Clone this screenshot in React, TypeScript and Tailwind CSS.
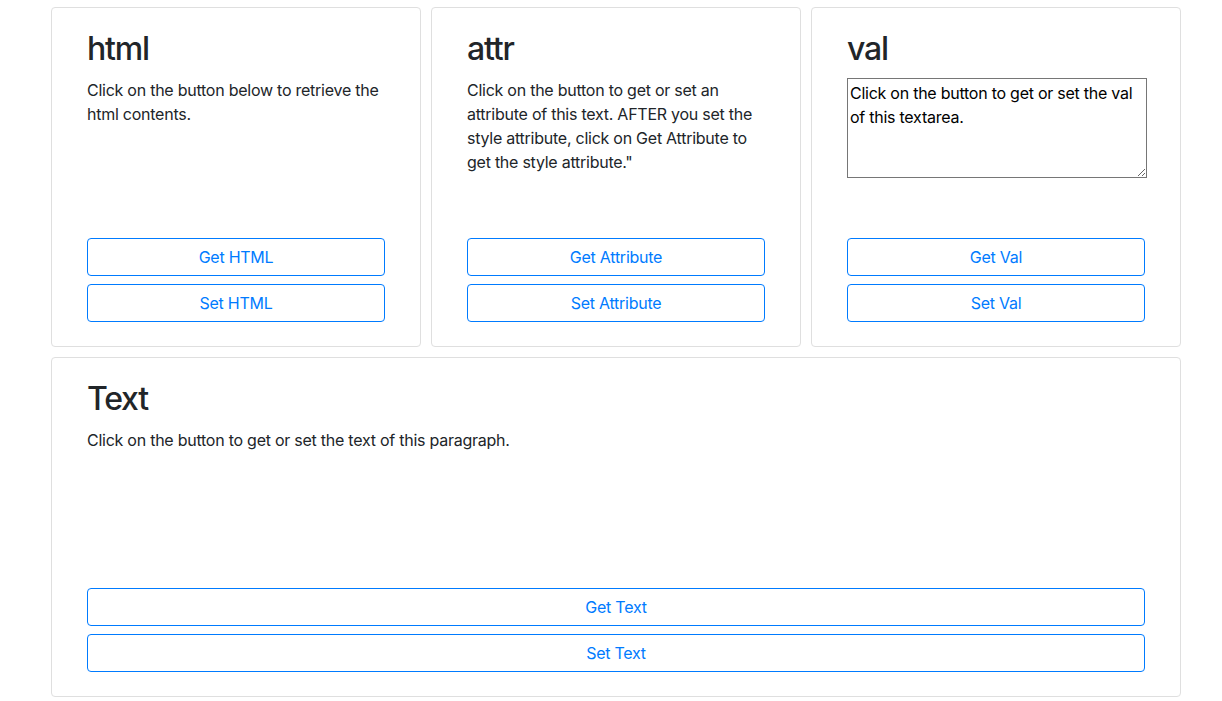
import React from 'react';

const font = { fontFamily: 'Inter, "Liberation Sans", sans-serif' };

function ActionButton({ label }: { label: string }) {
  return (
    <button
      type="button"
      className="block w-full h-[38px] rounded-[4px] border border-[#007bff] bg-white text-[16px] leading-6 tracking-[-0.25px] text-[#007bff] text-center"
    >
      {label}
    </button>
  );
}

function Card({
  title,
  children,
  actions,
  className = '',
}: {
  title: string;
  children: React.ReactNode;
  actions: string[];
  className?: string;
}) {
  return (
    <div className={`flex flex-col h-[340px] bg-white border border-[#dfdfdf] rounded-[4px] px-[35px] pt-[22px] pb-6 ${className}`}>
      <h2 className="text-[32px] font-[450] leading-[1.2] tracking-[-1.2px] text-[#212529] mb-[10px]">{title}</h2>
      <div>{children}</div>
      <div className="mt-auto flex flex-col gap-2">
        {actions.map((a) => (
          <ActionButton key={a} label={a} />
        ))}
      </div>
    </div>
  );
}

export default function App() {
  return (
    <div className="min-h-[701px] bg-white text-[#212529] text-[16px] leading-6 tracking-[-0.25px]" style={font}>
      <div className="pl-[51px] pt-[7px] w-[1181px]">
        <div className="grid grid-cols-3 gap-[10px]">
          <Card title="html" actions={['Get HTML', 'Set HTML']}>
            <p>Click on the button below to retrieve the html contents.</p>
          </Card>
          <Card title="attr" actions={['Get Attribute', 'Set Attribute']}>
            <p>
              Click on the button to get or set an attribute of this text. AFTER you set the style
              attribute, click on Get Attribute to get the style attribute."
            </p>
          </Card>
          <Card title="val" actions={['Get Val', 'Set Val']}>
            <textarea
              className="block w-[300px] h-[100px] border border-[#767676] px-[2px] py-[2px] text-[16px] leading-6 tracking-[-0.25px] text-black resize-y outline-none"
              style={font}
              defaultValue="Click on the button to get or set the val of this textarea."
            />
          </Card>
        </div>
        <Card title="Text" actions={['Get Text', 'Set Text']} className="mt-[10px]">
          <p>Click on the button to get or set the text of this paragraph.</p>
        </Card>
      </div>
    </div>
  );
}
